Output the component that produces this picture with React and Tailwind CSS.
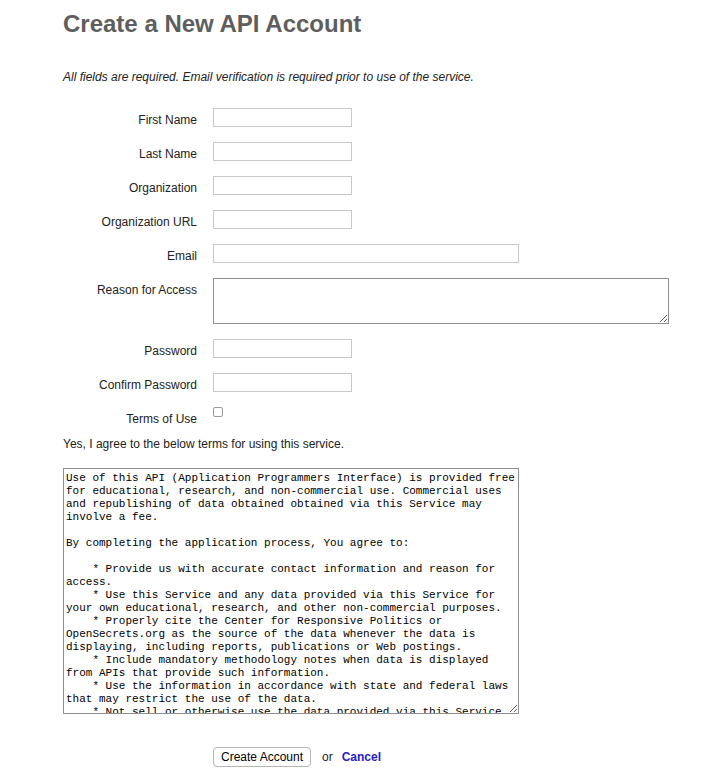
import { useState } from "react";

const TERMS = `Use of this API (Application Programmers Interface) is provided free
for educational, research, and non-commercial use. Commercial uses
and republishing of data obtained obtained via this Service may
involve a fee.

By completing the application process, You agree to:

    * Provide us with accurate contact information and reason for
access.
    * Use this Service and any data provided via this Service for
your own educational, research, and other non-commercial purposes.
    * Properly cite the Center for Responsive Politics or
OpenSecrets.org as the source of the data whenever the data is
displaying, including reports, publications or Web postings.
    * Include mandatory methodology notes when data is displayed
from APIs that provide such information.
    * Use the information in accordance with state and federal laws
that may restrict the use of the data.
    * Not sell or otherwise use the data provided via this Service
for commercial purposes without written permission.`;

function Row({ label, children }) {
    return (
        <div className="flex items-start mb-[15px]">
            <label className="w-[134px] shrink-0 text-right pt-[5px] leading-[14px]">
                {label}
            </label>
            <div className="ml-[16px]">
                {children}
            </div>
        </div>
    );
}

function Field({ width = "w-[139px]", type = "text" }) {
    return (
        <input
            type={type}
            className={`${width} h-[19px] block border border-[#c8c8c8] bg-white outline-none px-[2px] text-[12px]`}
        />
    );
}

export default function App() {
    const [agree, setAgree] = useState(false);

    return (
        <div className="min-h-screen bg-white text-[12px] text-[#222] font-['Liberation_Sans',Arial,sans-serif] pl-[63px] pt-[10px]">

            <h1 className="text-[24px] leading-[28px] font-bold text-[#5e5e5e]">
                Create a New API Account
            </h1>

            <p className="mt-[32px] italic leading-[14px]">
                All fields are required. Email verification is required prior to use of the service.
            </p>

            <form className="mt-[24px]" onSubmit={(e) => e.preventDefault()}>

                <Row label="First Name"><Field /></Row>
                <Row label="Last Name"><Field /></Row>
                <Row label="Organization"><Field /></Row>
                <Row label="Organization URL"><Field /></Row>
                <Row label="Email"><Field width="w-[306px]" type="email" /></Row>

                <Row label="Reason for Access">
                    <textarea className="block w-[456px] h-[46px] border border-[#8f8f8f] bg-white outline-none p-[2px] text-[12px]" />
                </Row>

                <Row label="Password"><Field type="password" /></Row>
                <Row label="Confirm Password"><Field type="password" /></Row>

                <div className="flex items-start">
                    <label className="w-[134px] shrink-0 text-right pt-[5px] leading-[14px]">
                        Terms of Use
                    </label>
                    <input
                        type="checkbox"
                        checked={agree}
                        onChange={() => setAgree(!agree)}
                        className="ml-[16px] mt-0 w-[10px] h-[10px] appearance-none border border-[#9a9a9a] rounded-[2px] bg-white checked:bg-[#3b82f6]"
                    />
                </div>

                <p className="mt-[11px] leading-[14px]">
                    Yes, I agree to the below terms for using this service.
                </p>

                <textarea
                    readOnly
                    defaultValue={TERMS}
                    className="block mt-[17px] w-[456px] h-[246px] border border-[#8f8f8f] bg-white outline-none px-[2px] pt-[3px] overflow-hidden text-[11px] leading-[13px] text-black font-['Liberation_Mono','Courier_New',monospace] whitespace-pre-wrap"
                />

                <div className="flex items-center mt-[33px] ml-[150px]">
                    <button
                        type="submit"
                        className="h-[20px] w-[98px] rounded-[4px] border border-[#b5b5b5] bg-white text-[12px] text-black"
                    >
                        Create Account
                    </button>
                    <span className="ml-[11px]">or</span>
                    <a href="#" className="ml-[9px] font-bold text-[#2323c9]">
                        Cancel
                    </a>
                </div>

            </form>

        </div>
    );
}
